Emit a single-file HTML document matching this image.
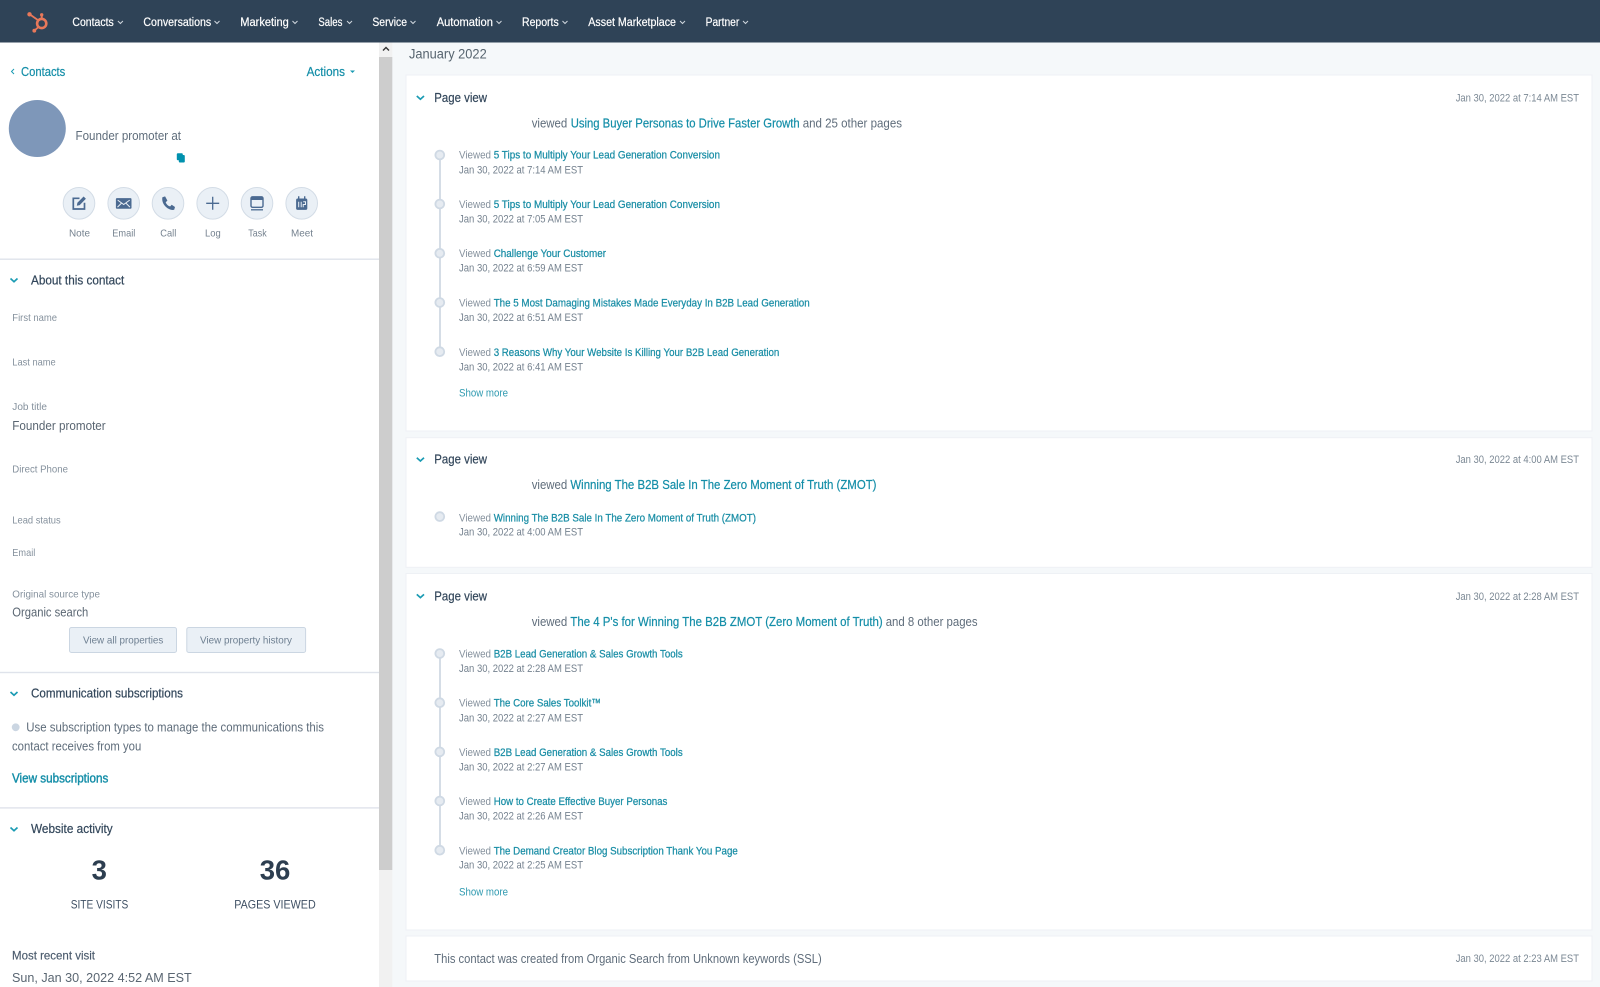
<!DOCTYPE html>
<html lang="en">
<head>
<meta charset="utf-8">
<title>Contact timeline</title>
<style>
html,body{margin:0;padding:0;background:#f5f8fa;width:1600px;height:987px;overflow:hidden}
svg{display:block;filter:blur(.3px)}
text{font-family:"Liberation Sans",sans-serif;white-space:pre}
.nav{font-size:11.5px;fill:#fff;stroke:#fff;stroke-width:.2}
.h{font-size:12.5px;fill:#33475b;stroke:#33475b;stroke-width:.2}
.lb{font-size:10.5px;fill:#85919d}
.val{font-size:12.5px;fill:#5a6672}
.lk{font-size:12.5px;fill:#148ea8;stroke:#148ea8;stroke-width:.2}
.t{font-size:12.5px;fill:#5f6d7b}
.gr{font-size:11px;fill:#85919d}
.ln{font-size:11px;fill:#1a8ea6;stroke:#1a8ea6;stroke-width:.25}
.dt{font-size:11px;fill:#75828f}
.sm{font-size:11px;fill:#2f9ab0}
.ts{font-size:11px;fill:#7b8894}
.al{font-size:10.5px;fill:#75828f}
.btn{font-size:10.5px;fill:#6f8092}
.chev{fill:none;stroke:#1a9bb3;stroke-width:1.7}
.nc{fill:none;stroke:#cfd6dd;stroke-width:1}
.card{fill:#fff;stroke:#eef1f5;stroke-width:1}
.tl{fill:#e6ebf1;stroke:#cfd9e4;stroke-width:1.8}
.ab{fill:#eaf0f6;stroke:#d3dce6;stroke-width:1}
.ic{fill:#4b6a91}
.ics{fill:none;stroke:#4b6a91;stroke-width:1.7}
</style>
</head>
<body>
<svg width="1600" height="987" viewBox="0 0 1600 987" xmlns="http://www.w3.org/2000/svg">
<rect width="1600" height="987" fill="#f5f8fa"/>

<!-- top nav -->
<rect width="1600" height="42.5" fill="#2f4357"/>
<g fill="none" stroke="#e8785a">
<circle cx="41.7" cy="23.5" r="4.6" stroke-width="2.6"/>
<path d="M30 14.5L38.5 20.5" stroke-width="1.8"/>
<path d="M41.7 15.5V19" stroke-width="2"/>
<path d="M34.5 30.5L38.5 27" stroke-width="1.8"/>
</g>
<g fill="#e8785a"><circle cx="29.5" cy="14.3" r="2.2"/><circle cx="41.7" cy="14.8" r="1.7"/><circle cx="34.3" cy="30.7" r="1.9"/></g>
<text class="nav" x="72.4" y="26" textLength="41.4" lengthAdjust="spacingAndGlyphs">Contacts</text>
<text class="nav" x="143.4" y="26" textLength="67.8" lengthAdjust="spacingAndGlyphs">Conversations</text>
<text class="nav" x="240.3" y="26" textLength="48.5" lengthAdjust="spacingAndGlyphs">Marketing</text>
<text class="nav" x="318.4" y="26" textLength="24" lengthAdjust="spacingAndGlyphs">Sales</text>
<text class="nav" x="372.4" y="26" textLength="34.6" lengthAdjust="spacingAndGlyphs">Service</text>
<text class="nav" x="436.7" y="26" textLength="56.2" lengthAdjust="spacingAndGlyphs">Automation</text>
<text class="nav" x="522" y="26" textLength="36.7" lengthAdjust="spacingAndGlyphs">Reports</text>
<text class="nav" x="588.3" y="26" textLength="87.7" lengthAdjust="spacingAndGlyphs">Asset Marketplace</text>
<text class="nav" x="705.6" y="26" textLength="33.7" lengthAdjust="spacingAndGlyphs">Partner</text>
<path class="nc" d="M117.9 21l2.5 2.5 2.5-2.5M214.5 21l2.5 2.5 2.5-2.5M292.5 21l2.5 2.5 2.5-2.5M347 21l2.5 2.5 2.5-2.5M410.5 21l2.5 2.5 2.5-2.5M496.5 21l2.5 2.5 2.5-2.5M562.5 21l2.5 2.5 2.5-2.5M680 21l2.5 2.5 2.5-2.5M743 21l2.5 2.5 2.5-2.5"/>

<!-- sidebar -->
<rect x="0" y="42.5" width="379" height="944.5" fill="#fff"/>
<rect x="379" y="42.5" width="13.3" height="944.5" fill="#f1f1f1"/>
<rect x="379" y="57" width="13.3" height="813" fill="#cdcdcd"/>
<path d="M383 50.5l3-3 3 3" fill="none" stroke="#333" stroke-width="1.4"/>

<path d="M14 69l-2.5 2.5 2.5 2.5" fill="none" stroke="#1a9bb3" stroke-width="1"/>
<text class="lk" x="21" y="76" textLength="44.3" lengthAdjust="spacingAndGlyphs">Contacts</text>
<text class="lk" x="306.6" y="76" textLength="38.4" lengthAdjust="spacingAndGlyphs">Actions</text>
<path d="M350 70.5h5l-2.5 2.5z" fill="#1a9bb3"/>

<circle cx="37.3" cy="128.5" r="28.5" fill="#7e97b9"/>
<text class="t" x="75.5" y="140" textLength="105.5" lengthAdjust="spacingAndGlyphs">Founder promoter at</text>
<rect x="176.8" y="153.2" width="6" height="7" rx="1" fill="#0091ae"/>
<rect x="178.8" y="155" width="6" height="7.5" rx="1" fill="#0091ae"/>

<g class="ab">
<circle cx="79" cy="203.3" r="15.8"/><circle cx="123.7" cy="203.3" r="15.8"/><circle cx="168" cy="203.3" r="15.8"/><circle cx="212.7" cy="203.3" r="15.8"/><circle cx="257" cy="203.3" r="15.8"/><circle cx="301.7" cy="203.3" r="15.8"/>
</g>
<g transform="translate(79 203.3)"><path class="ics" d="M0.5-5H-5.7V5.7H5.5V-0.5"/><path class="ic" d="M-2.2 2.4L-1.6-0.6 4.6-6.8 6.9-4.5 0.7 1.8Z"/></g>
<g transform="translate(123.7 203.3)"><rect class="ic" x="-7.8" y="-5.2" width="15.6" height="10.6" rx="1"/><path d="M-6-3.2L0 1.2 6-3.2M-6.2 3.8L-2.2-.2M6.2 3.8L2.2-.2" fill="none" stroke="#eaf0f6" stroke-width="1"/></g>
<g transform="translate(168 203.3)"><path class="ic" d="M-5.6-6L-2.9-6.9-0.6-2.7-2.3-1C-1.7 1 0 2.6 2.1 3.2L3.7 1.5 7 3.7 6.2 6.5C0.2 7.8-7 0.8-5.6-6Z"/></g>
<g transform="translate(212.7 203.3)"><path d="M-6.5 0H6.5M0-6.5V6.5" fill="none" stroke="#4b6a91" stroke-width="1.3"/></g>
<g transform="translate(257 203.3)"><rect x="-6" y="-6.5" width="12" height="10.5" rx="1.6" fill="none" stroke="#4b6a91" stroke-width="1.4"/><rect class="ic" x="-6" y="-6.5" width="12" height="3.2"/><path d="M-6 6.5H6" stroke="#4b6a91" stroke-width="1.3"/></g>
<g transform="translate(301.7 203.3)"><rect class="ic" x="-5.6" y="-4.8" width="11.2" height="11.4" rx="1.6"/><path d="M-3-7V-3.5M3-7V-3.5" stroke="#4b6a91" stroke-width="1.4"/><path d="M-3-1.5V4M-.5-1.5V4M1.5-1.5H3.8V1.2H1.5V4" fill="none" stroke="#eaf0f6" stroke-width="1"/></g>

<text class="al" x="69" y="236.5" textLength="21" lengthAdjust="spacingAndGlyphs">Note</text>
<text class="al" x="112.3" y="236.5" textLength="23" lengthAdjust="spacingAndGlyphs">Email</text>
<text class="al" x="160.3" y="236.5" textLength="16" lengthAdjust="spacingAndGlyphs">Call</text>
<text class="al" x="205" y="236.5" textLength="15.7" lengthAdjust="spacingAndGlyphs">Log</text>
<text class="al" x="248.3" y="236.5" textLength="18.4" lengthAdjust="spacingAndGlyphs">Task</text>
<text class="al" x="291" y="236.5" textLength="22" lengthAdjust="spacingAndGlyphs">Meet</text>

<rect x="0" y="258.5" width="379" height="1.4" fill="#dfe3eb"/>
<path class="chev" d="M10.5 278.5l3.5 3.2 3.5-3.2"/>
<text class="h" x="31" y="284.5" textLength="93.3" lengthAdjust="spacingAndGlyphs">About this contact</text>

<text class="lb" x="12.3" y="321" textLength="44.7" lengthAdjust="spacingAndGlyphs">First name</text>
<text class="lb" x="12.3" y="365.7" textLength="43.4" lengthAdjust="spacingAndGlyphs">Last name</text>
<text class="lb" x="12.3" y="410" textLength="34.7" lengthAdjust="spacingAndGlyphs">Job title</text>
<text class="val" x="12.3" y="430" textLength="93.4" lengthAdjust="spacingAndGlyphs">Founder promoter</text>
<text class="lb" x="12.3" y="472.7" textLength="55.7" lengthAdjust="spacingAndGlyphs">Direct Phone</text>
<text class="lb" x="12.3" y="523.7" textLength="48.4" lengthAdjust="spacingAndGlyphs">Lead status</text>
<text class="lb" x="12.3" y="556" textLength="23" lengthAdjust="spacingAndGlyphs">Email</text>
<text class="lb" x="12.3" y="597.7" textLength="87.7" lengthAdjust="spacingAndGlyphs">Original source type</text>
<text class="val" x="12.3" y="616.3" textLength="76" lengthAdjust="spacingAndGlyphs">Organic search</text>

<rect x="69.5" y="627.5" width="107" height="25" rx="2" fill="#eaf0f6" stroke="#cbd6e2"/>
<rect x="186.8" y="627.5" width="118.8" height="25" rx="2" fill="#eaf0f6" stroke="#cbd6e2"/>
<text class="btn" x="83" y="643.7" textLength="80.3" lengthAdjust="spacingAndGlyphs">View all properties</text>
<text class="btn" x="200" y="643.7" textLength="92" lengthAdjust="spacingAndGlyphs">View property history</text>

<rect x="0" y="671.8" width="379" height="1.4" fill="#dfe3eb"/>
<path class="chev" d="M10.5 692l3.5 3.2 3.5-3.2"/>
<text class="h" x="31" y="697.4" textLength="152" lengthAdjust="spacingAndGlyphs">Communication subscriptions</text>
<circle cx="15.7" cy="727.3" r="3.9" fill="#cbd6e2"/>
<text class="t" x="26.3" y="731.6" textLength="297.7" lengthAdjust="spacingAndGlyphs">Use subscription types to manage the communications this</text>
<text class="t" x="12" y="750.6" textLength="129.3" lengthAdjust="spacingAndGlyphs">contact receives from you</text>
<text class="lk" x="12" y="782.7" textLength="96.3" lengthAdjust="spacingAndGlyphs" style="stroke-width:.4">View subscriptions</text>

<rect x="0" y="807.2" width="379" height="1.4" fill="#dfe3eb"/>
<path class="chev" d="M10.5 827.5l3.5 3.2 3.5-3.2"/>
<text class="h" x="31" y="833.2" textLength="81.7" lengthAdjust="spacingAndGlyphs">Website activity</text>
<text x="99.3" y="879.5" text-anchor="middle" font-size="27.5" font-weight="700" fill="#2d3e50">3</text>
<text x="275" y="879.5" text-anchor="middle" font-size="27.5" font-weight="700" fill="#2d3e50">36</text>
<text x="70.7" y="908.5" font-size="12" fill="#3f5064" textLength="57.6" lengthAdjust="spacingAndGlyphs">SITE VISITS</text>
<text x="234.3" y="908.5" font-size="12" fill="#3f5064" textLength="81.4" lengthAdjust="spacingAndGlyphs">PAGES VIEWED</text>
<text x="12" y="959.5" font-size="12" fill="#4a5a6c" stroke="#4a5a6c" stroke-width=".15" textLength="83" lengthAdjust="spacingAndGlyphs">Most recent visit</text>
<text class="val" x="12" y="982.2" textLength="179.7" lengthAdjust="spacingAndGlyphs">Sun, Jan 30, 2022 4:52 AM EST</text>

<!-- timeline -->
<text x="409" y="58.5" font-size="13.5" fill="#56646f" textLength="77.7" lengthAdjust="spacingAndGlyphs">January 2022</text>

<!-- card 1 -->
<rect class="card" x="406" y="75" width="1186" height="356"/>
<path class="chev" d="M416.8 96l3.6 3.2 3.6-3.2"/>
<text class="h" x="434.3" y="102" textLength="52.7" lengthAdjust="spacingAndGlyphs">Page view</text>
<text class="ts" x="1455.7" y="101.3" textLength="123.3" lengthAdjust="spacingAndGlyphs">Jan 30, 2022 at 7:14 AM EST</text>
<text class="t" x="531.7" y="127.5" textLength="35.6" lengthAdjust="spacingAndGlyphs">viewed</text>
<text class="lk" x="570.7" y="127.5" textLength="229" lengthAdjust="spacingAndGlyphs">Using Buyer Personas to Drive Faster Growth</text>
<text class="t" x="802.7" y="127.5" textLength="99.3" lengthAdjust="spacingAndGlyphs">and 25 other pages</text>
<rect x="439" y="155" width="2" height="197" fill="#d5dde6"/>
<g class="tl"><circle cx="439.8" cy="155" r="4.4"/><circle cx="439.8" cy="204" r="4.4"/><circle cx="439.8" cy="253.3" r="4.4"/><circle cx="439.8" cy="302.5" r="4.4"/><circle cx="439.8" cy="351.7" r="4.4"/></g>

<text class="gr" x="459" y="158.7" textLength="32" lengthAdjust="spacingAndGlyphs">Viewed</text>
<text class="ln" x="493.7" y="158.7" textLength="226.3" lengthAdjust="spacingAndGlyphs">5 Tips to Multiply Your Lead Generation Conversion</text>
<text class="dt" x="459" y="173.5" textLength="124" lengthAdjust="spacingAndGlyphs">Jan 30, 2022 at 7:14 AM EST</text>
<text class="gr" x="459" y="208" textLength="32" lengthAdjust="spacingAndGlyphs">Viewed</text>
<text class="ln" x="493.7" y="208" textLength="226.3" lengthAdjust="spacingAndGlyphs">5 Tips to Multiply Your Lead Generation Conversion</text>
<text class="dt" x="459" y="222.3" textLength="124" lengthAdjust="spacingAndGlyphs">Jan 30, 2022 at 7:05 AM EST</text>
<text class="gr" x="459" y="257.1" textLength="32" lengthAdjust="spacingAndGlyphs">Viewed</text>
<text class="ln" x="493.7" y="257.1" textLength="112.3" lengthAdjust="spacingAndGlyphs">Challenge Your Customer</text>
<text class="dt" x="459" y="271.5" textLength="124" lengthAdjust="spacingAndGlyphs">Jan 30, 2022 at 6:59 AM EST</text>
<text class="gr" x="459" y="306.6" textLength="32" lengthAdjust="spacingAndGlyphs">Viewed</text>
<text class="ln" x="493.7" y="306.6" textLength="316" lengthAdjust="spacingAndGlyphs">The 5 Most Damaging Mistakes Made Everyday In B2B Lead Generation</text>
<text class="dt" x="459" y="321" textLength="124" lengthAdjust="spacingAndGlyphs">Jan 30, 2022 at 6:51 AM EST</text>
<text class="gr" x="459" y="356" textLength="32" lengthAdjust="spacingAndGlyphs">Viewed</text>
<text class="ln" x="493.7" y="356" textLength="285.6" lengthAdjust="spacingAndGlyphs">3 Reasons Why Your Website Is Killing Your B2B Lead Generation</text>
<text class="dt" x="459" y="370.3" textLength="124" lengthAdjust="spacingAndGlyphs">Jan 30, 2022 at 6:41 AM EST</text>
<text class="sm" x="459" y="396.7" textLength="49" lengthAdjust="spacingAndGlyphs">Show more</text>

<!-- card 2 -->
<rect class="card" x="406" y="437.7" width="1186" height="129.6"/>
<path class="chev" d="M416.8 457.8l3.6 3.2 3.6-3.2"/>
<text class="h" x="434.3" y="463.6" textLength="52.7" lengthAdjust="spacingAndGlyphs">Page view</text>
<text class="ts" x="1455.7" y="463.2" textLength="123.3" lengthAdjust="spacingAndGlyphs">Jan 30, 2022 at 4:00 AM EST</text>
<text class="t" x="531.7" y="489.2" textLength="35.6" lengthAdjust="spacingAndGlyphs">viewed</text>
<text class="lk" x="570.4" y="489.2" textLength="306.1" lengthAdjust="spacingAndGlyphs">Winning The B2B Sale In The Zero Moment of Truth (ZMOT)</text>
<circle class="tl" cx="439.8" cy="516.6" r="4.4"/>
<text class="gr" x="459" y="521.3" textLength="32" lengthAdjust="spacingAndGlyphs">Viewed</text>
<text class="ln" x="493.7" y="521.3" textLength="262.3" lengthAdjust="spacingAndGlyphs">Winning The B2B Sale In The Zero Moment of Truth (ZMOT)</text>
<text class="dt" x="459" y="535.5" textLength="124" lengthAdjust="spacingAndGlyphs">Jan 30, 2022 at 4:00 AM EST</text>

<!-- card 3 -->
<rect class="card" x="406" y="573.5" width="1186" height="356.5"/>
<path class="chev" d="M416.8 594.4l3.6 3.2 3.6-3.2"/>
<text class="h" x="434.3" y="600.3" textLength="52.7" lengthAdjust="spacingAndGlyphs">Page view</text>
<text class="ts" x="1455.7" y="600" textLength="123.3" lengthAdjust="spacingAndGlyphs">Jan 30, 2022 at 2:28 AM EST</text>
<text class="t" x="531.7" y="625.9" textLength="35.6" lengthAdjust="spacingAndGlyphs">viewed</text>
<text class="lk" x="570.4" y="625.9" textLength="312.3" lengthAdjust="spacingAndGlyphs">The 4 P's for Winning The B2B ZMOT (Zero Moment of Truth)</text>
<text class="t" x="885.7" y="625.9" textLength="91.9" lengthAdjust="spacingAndGlyphs">and 8 other pages</text>
<rect x="439" y="653" width="2" height="197" fill="#d5dde6"/>
<g class="tl"><circle cx="439.8" cy="653.5" r="4.4"/><circle cx="439.8" cy="702.7" r="4.4"/><circle cx="439.8" cy="751.9" r="4.4"/><circle cx="439.8" cy="801" r="4.4"/><circle cx="439.8" cy="850.2" r="4.4"/></g>

<text class="gr" x="459" y="657.7" textLength="32" lengthAdjust="spacingAndGlyphs">Viewed</text>
<text class="ln" x="493.7" y="657.7" textLength="189" lengthAdjust="spacingAndGlyphs">B2B Lead Generation &amp; Sales Growth Tools</text>
<text class="dt" x="459" y="672" textLength="124" lengthAdjust="spacingAndGlyphs">Jan 30, 2022 at 2:28 AM EST</text>
<text class="gr" x="459" y="706.7" textLength="32" lengthAdjust="spacingAndGlyphs">Viewed</text>
<text class="ln" x="493.7" y="706.7" textLength="107.3" lengthAdjust="spacingAndGlyphs">The Core Sales Toolkit™</text>
<text class="dt" x="459" y="721.3" textLength="124" lengthAdjust="spacingAndGlyphs">Jan 30, 2022 at 2:27 AM EST</text>
<text class="gr" x="459" y="756.1" textLength="32" lengthAdjust="spacingAndGlyphs">Viewed</text>
<text class="ln" x="493.7" y="756.1" textLength="189" lengthAdjust="spacingAndGlyphs">B2B Lead Generation &amp; Sales Growth Tools</text>
<text class="dt" x="459" y="770.5" textLength="124" lengthAdjust="spacingAndGlyphs">Jan 30, 2022 at 2:27 AM EST</text>
<text class="gr" x="459" y="805.1" textLength="32" lengthAdjust="spacingAndGlyphs">Viewed</text>
<text class="ln" x="493.7" y="805.1" textLength="173.7" lengthAdjust="spacingAndGlyphs">How to Create Effective Buyer Personas</text>
<text class="dt" x="459" y="819.6" textLength="124" lengthAdjust="spacingAndGlyphs">Jan 30, 2022 at 2:26 AM EST</text>
<text class="gr" x="459" y="854.3" textLength="32" lengthAdjust="spacingAndGlyphs">Viewed</text>
<text class="ln" x="493.7" y="854.3" textLength="244.1" lengthAdjust="spacingAndGlyphs">The Demand Creator Blog Subscription Thank You Page</text>
<text class="dt" x="459" y="868.6" textLength="124" lengthAdjust="spacingAndGlyphs">Jan 30, 2022 at 2:25 AM EST</text>
<text class="sm" x="459" y="895.3" textLength="49" lengthAdjust="spacingAndGlyphs">Show more</text>

<!-- card 4 -->
<rect class="card" x="406" y="936" width="1186" height="45"/>
<text class="t" x="434.3" y="963" textLength="387.4" lengthAdjust="spacingAndGlyphs">This contact was created from Organic Search from Unknown keywords (SSL)</text>
<text class="ts" x="1455.7" y="962.2" textLength="123.3" lengthAdjust="spacingAndGlyphs">Jan 30, 2022 at 2:23 AM EST</text>
</svg>
</body>
</html>
